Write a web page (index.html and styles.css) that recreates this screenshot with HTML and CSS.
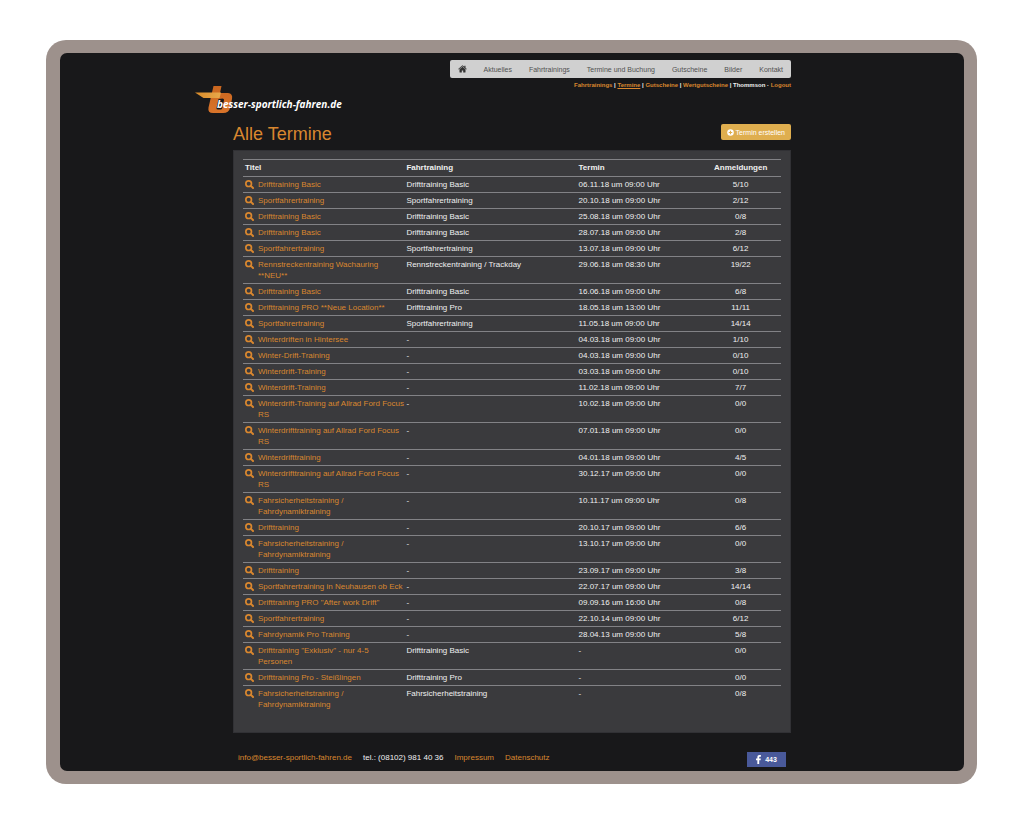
FILE: index.html
```html
<!DOCTYPE html>
<html lang="de">
<head>
<meta charset="utf-8">
<meta name="viewport" content="width=device-width, initial-scale=1">
<title>Alle Termine – besser-sportlich-fahren.de</title>
<link rel="stylesheet" href="styles.css">
</head>
<body>
<svg width="0" height="0" class="sprite" aria-hidden="true">
  <symbol id="search" viewBox="0 0 16 16"><circle cx="6.5" cy="6.5" r="5" fill="none" stroke="currentColor" stroke-width="3"/><path d="M10.500 10.500l3.800 3.800" stroke="currentColor" stroke-width="3.400" stroke-linecap="round"/></symbol>
</svg>
<div class="frame">
  <div class="screen">
    <div class="page">
      <header class="header">
        <nav class="nav" aria-label="Hauptmenü">
          <a href="#" aria-label="Startseite"><svg class="home" viewBox="0 0 18 16"><path fill="currentColor" d="M9 3.6 3 8.700V14a1 1 0 0 0 1 1h3.600v-4h2.800v4H14a1 1 0 0 0 1-1V8.700z"/><path fill="currentColor" d="M9 .6.4 7.800l1 1.200L9 2.700 16.600 9l1-1.200L15 5.600V1.500h-2.300v2.200z"/></svg></a>
          <a href="#">Aktuelles</a>
          <a href="#">Fahrtrainings</a>
          <a href="#">Termine und Buchung</a>
          <a href="#">Gutscheine</a>
          <a href="#">Bilder</a>
          <a href="#">Kontakt</a>
        </nav>
        <div class="subnav"><a href="#">Fahrtrainings</a> | <a href="#" class="current">Termine</a> | <a href="#">Gutscheine</a> | <a href="#">Wertgutscheine</a> | Thommson · <a href="#">Logout</a></div>
      </header>
      <a href="#" class="logo">
        <svg class="mark" viewBox="0 0 38 28" aria-hidden="true">
          <defs>
            <linearGradient id="stem" x1="0" y1="0" x2="0" y2="1"><stop offset="0" stop-color="#c9661f"/><stop offset="1" stop-color="#d9742a"/></linearGradient>
            <linearGradient id="wing" x1="0" y1="0" x2="1" y2="0"><stop offset="0" stop-color="#d88a28"/><stop offset="1" stop-color="#e8a94c"/></linearGradient>
          </defs>
          <path fill="url(#stem)" fill-rule="evenodd" d="M18.500 0H26.500L25 7H33Q38 7.500 37 13L35 22Q34 27 28 27H18Q12.500 27 13.500 21.500ZM23.500 13 21.500 22Q21.200 23.500 23 23.500H25.500Q27 23.500 27.400 22L29 14Q29.300 12.500 27.500 12.500Z"/>
          <path fill="url(#wing)" d="M0 6.500H26L24.500 12H8.500Z"/>
        </svg>
        <span class="logo-text">besser-sportlich-fahren.de</span>
      </a>
      <main>
        <div class="heading">
          <h1>Alle Termine</h1>
          <button type="button" class="create"><svg class="plus" viewBox="0 0 16 16" aria-hidden="true"><circle cx="8" cy="8" r="7.500" fill="#fff"/><path d="M8 4v8M4 8h8" stroke="#dfae4f" stroke-width="2.500"/></svg>Termin erstellen</button>
        </div>
        <div class="panel">
          <table class="dates">
            <thead><tr><th class="title">Titel</th><th class="course">Fahrtraining</th><th class="date">Termin</th><th class="count">Anmeldungen</th></tr></thead>
            <tbody id="rows"></tbody>
          </table>
        </div>
      </main>
      <footer class="footer">
        <div class="links">
          <a href="#">info@besser-sportlich-fahren.de</a>
          <span>tel.: (08102) 981 40 36</span>
          <a href="#">Impressum</a>
          <a href="#">Datenschutz</a>
        </div>
        <button type="button" class="fb"><svg class="fb-icon" viewBox="0 0 10 18" aria-hidden="true"><path fill="#fff" d="M2.700 18V10.300H0V6.800H2.700V4.500C2.700 1.500 4.400 0 7 0c1.100 0 2.300.1 2.800.2v3.100H8c-1.300 0-1.600.6-1.600 1.500v2h3.200L9.100 10.300H6.400V18z"/></svg>443</button>
      </footer>
    </div>
  </div>
</div>
<script src="script.js"></script>
</body>
</html>
```
FILE: styles.css
```css
* { box-sizing: border-box; }

body {
  margin: 0;
  padding: 40px 47px 48px 46px;
  background: #fff;
  color: #f0f0f0;
  font: 8px/11px "Liberation Sans", Arial, sans-serif;
}

a { color: #d9872f; text-decoration: none; }
button { font: inherit; border: 0; margin: 0; cursor: pointer; }
.sprite { position: absolute; }

.frame {
  padding: 13px 13px 13px 14px;
  border-radius: 20px;
  background: #9d918c;
}
.screen {
  padding: 7px 20px 4px;
  border-radius: 7px;
  background: #18181a;
}
.page { max-width: 558px; margin: 0 auto; }

.header {
  display: flex;
  flex-direction: column;
  align-items: flex-end;
}
.nav {
  display: flex;
  align-items: center;
  gap: 17px;
  height: 18px;
  padding: 0 8px;
  border-radius: 2px;
  background: #d0d0d0;
  font-size: 7px;
}
.nav a { color: #505050; }
.home { display: block; width: 9px; height: 8px; color: #333; }
.subnav {
  padding-top: 2px;
  font-size: 6px;
  font-weight: 700;
  line-height: 10px;
}
.current { text-decoration: underline; }

.logo {
  display: flex;
  align-items: center;
  width: max-content;
  height: 27px;
  margin: -4px 0 0 -38px;
}
.mark { width: 38px; height: 28px; }
.logo-text {
  margin: 9px 0 0 -16px;
  color: #fff;
  font: italic 700 10px/12px "Open Sans", sans-serif;
}

.heading {
  display: flex;
  align-items: center;
  justify-content: space-between;
  padding: 11px 0 6px;
}
h1 {
  margin: 0;
  color: #d9872f;
  font-size: 18px;
  font-weight: 400;
  line-height: 20px;
}
.create {
  display: flex;
  align-items: center;
  gap: 2px;
  height: 16px;
  margin-bottom: 4px;
  padding: 0 6px;
  border-radius: 2px;
  background: #dfae4f;
  color: #fff;
  font-size: 7px;
}
.plus { width: 7px; height: 7px; }

.panel {
  padding: 8px 9px 20px;
  border: 1px solid #313135;
  background: #3a3a3d;
}
.dates {
  width: 100%;
  border-collapse: collapse;
  table-layout: fixed;
}
.dates th, .dates td {
  padding: 2px 0 2px 2px;
  border-top: 1px solid #828286;
  text-align: left;
  vertical-align: top;
}
.dates th { padding-bottom: 3px; }
.title { width: 30%; }
.course { width: 32%; }
.date { width: 23%; }
.count { width: 15%; }
.dates .count { padding-left: 0; text-align: center; }
.entry { display: flex; gap: 4px; }
.entry svg { flex: none; width: 9px; height: 9px; margin-top: 1px; }

.footer {
  display: flex;
  align-items: center;
  justify-content: space-between;
  padding: 19px 5px 0;
}
.links { display: flex; gap: 11px; padding-bottom: 4px; }
.fb {
  display: flex;
  align-items: center;
  justify-content: center;
  gap: 4px;
  width: 39px;
  height: 15px;
  padding: 0;
  background: #49599a;
  color: #fff;
  font-size: 7px;
  font-weight: 700;
}
.fb-icon { width: 5px; height: 9px; }
```
FILE: script.js
```js
const rows = [
  ["Drifttraining Basic", "Drifttraining Basic", "06.11.18 um 09:00 Uhr", "5/10"],
  ["Sportfahrertraining", "Sportfahrertraining", "20.10.18 um 09:00 Uhr", "2/12"],
  ["Drifttraining Basic", "Drifttraining Basic", "25.08.18 um 09:00 Uhr", "0/8"],
  ["Drifttraining Basic", "Drifttraining Basic", "28.07.18 um 09:00 Uhr", "2/8"],
  ["Sportfahrertraining", "Sportfahrertraining", "13.07.18 um 09:00 Uhr", "6/12"],
  ["Rennstreckentraining Wachauring **NEU**", "Rennstreckentraining / Trackday", "29.06.18 um 08:30 Uhr", "19/22"],
  ["Drifttraining Basic", "Drifttraining Basic", "16.06.18 um 09:00 Uhr", "6/8"],
  ["Drifttraining PRO **Neue Location**", "Drifttraining Pro", "18.05.18 um 13:00 Uhr", "11/11"],
  ["Sportfahrertraining", "Sportfahrertraining", "11.05.18 um 09:00 Uhr", "14/14"],
  ["Winterdriften in Hintersee", "-", "04.03.18 um 09:00 Uhr", "1/10"],
  ["Winter-Drift-Training", "-", "04.03.18 um 09:00 Uhr", "0/10"],
  ["Winterdrift-Training", "-", "03.03.18 um 09:00 Uhr", "0/10"],
  ["Winterdrift-Training", "-", "11.02.18 um 09:00 Uhr", "7/7"],
  ["Winterdrift-Training auf Allrad Ford Focus RS", "-", "10.02.18 um 09:00 Uhr", "0/0"],
  ["Winterdrifttraining auf Allrad Ford Focus RS", "-", "07.01.18 um 09:00 Uhr", "0/0"],
  ["Winterdrifttraining", "-", "04.01.18 um 09:00 Uhr", "4/5"],
  ["Winterdrifttraining auf Allrad Ford Focus RS", "-", "30.12.17 um 09:00 Uhr", "0/0"],
  ["Fahrsicherheitstraining / Fahrdynamiktraining", "-", "10.11.17 um 09:00 Uhr", "0/8"],
  ["Drifttraining", "-", "20.10.17 um 09:00 Uhr", "6/6"],
  ["Fahrsicherheitstraining / Fahrdynamiktraining", "-", "13.10.17 um 09:00 Uhr", "0/0"],
  ["Drifttraining", "-", "23.09.17 um 09:00 Uhr", "3/8"],
  ["Sportfahrertraining in Neuhausen ob Eck", "-", "22.07.17 um 09:00 Uhr", "14/14"],
  ["Drifttraining PRO \"After work Drift\"", "-", "09.09.16 um 16:00 Uhr", "0/8"],
  ["Sportfahrertraining", "-", "22.10.14 um 09:00 Uhr", "6/12"],
  ["Fahrdynamik Pro Training", "-", "28.04.13 um 09:00 Uhr", "5/8"],
  ["Drifttraining \"Exklusiv\" - nur 4-5 Personen", "Drifttraining Basic", "-", "0/0"],
  ["Drifttraining Pro - Steißlingen", "Drifttraining Pro", "-", "0/0"],
  ["Fahrsicherheitstraining / Fahrdynamiktraining", "Fahrsicherheitstraining", "-", "0/8"]
];

document.getElementById("rows").innerHTML = rows.map(([title, course, date, count]) => `
  <tr>
    <td><a href="#" class="entry"><svg aria-hidden="true"><use href="#search"/></svg><span>${title}</span></a></td>
    <td>${course}</td>
    <td>${date}</td>
    <td class="count">${count}</td>
  </tr>`).join("");
```
